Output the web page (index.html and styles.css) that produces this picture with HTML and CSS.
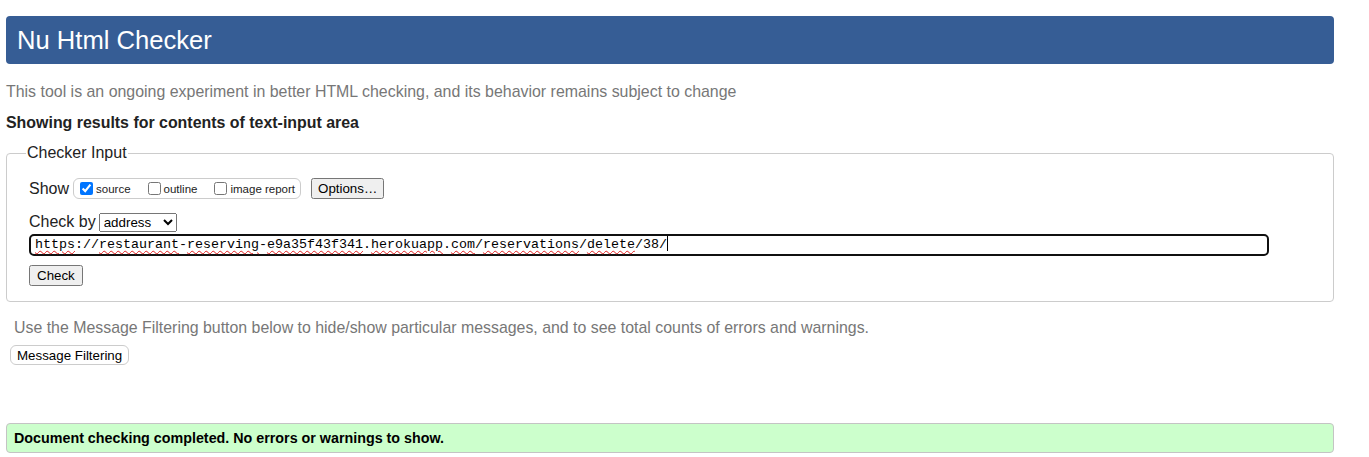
FILE: index.html
```html
<!DOCTYPE html>
<html lang="en">
<head>
<meta charset="utf-8">
<title>Nu Html Checker</title>
<link rel="stylesheet" href="styles.css">
</head>
<body>
<div class="page">
  <h1 class="header">Nu Html Checker</h1>
  <p class="intro">This tool is an ongoing experiment in better HTML checking, and its behavior remains subject to change</p>
  <p class="showing">Showing results for contents of text-input area</p>
  <fieldset class="checker">
    <legend class="legend">Checker Input</legend>
    <div class="row show-row">
      <span class="label">Show</span>
      <span class="opts">
        <label class="opt"><input type="checkbox" checked> source</label>
        <label class="opt"><input type="checkbox"> outline</label>
        <label class="opt"><input type="checkbox"> image report</label>
      </span>
      <button class="btn options">Options…</button>
    </div>
    <div class="row by-row">
      <span class="label">Check by</span>
      <select class="sel"><option>address</option></select>
    </div>
    <div class="url"><span class="sp">https</span>://<span class="sp">restaurant</span>-<span class="sp">reserving</span>-<span class="sp">e9a35f43f341</span>.<span class="sp">herokuapp</span>.<span class="sp">com</span>/<span class="sp">reservations</span>/<span class="sp">delete</span>/38/<span class="caret"></span></div>
    <div class="row check-row"><button class="btn check">Check</button></div>
  </fieldset>
  <p class="filter-note">Use the Message Filtering button below to hide/show particular messages, and to see total counts of errors and warnings.</p>
  <button class="filter-btn">Message Filtering</button>
  <div class="success">Document checking completed. No errors or warnings to show.</div>
</div>
</body>
</html>
```
FILE: styles.css
```css
html, body {
  margin: 0;
  padding: 0;
  background: #fff;
}
body {
  font-family: "Liberation Sans", Arial, sans-serif;
  font-size: 16px;
  color: #222;
}
.page {
  margin: 16px 35px 0 6px;
}
.header {
  margin: 0;
  height: 48px;
  line-height: 48px;
  background: #365d95;
  color: #fff;
  font-weight: normal;
  font-size: 25.6px;
  padding-left: 11px;
  border-radius: 4px;
}
.intro {
  margin: 19px 0 0 0;
  line-height: 18px;
  font-size: 15.93px;
  color: #777;
}
.showing {
  margin: 13px 0 0 0;
  line-height: 18px;
  font-size: 15.93px;
  font-weight: bold;
}
.checker {
  margin: 12px 0 0 0;
  border: 1px solid #ccc;
  border-radius: 4px;
  padding: 9px 22px 15px 22px;
}
.legend {
  padding: 0 1px;
  margin-left: -3px;
  line-height: 18px;
  color: #222;
}
.row {
  display: flex;
  align-items: center;
}
.show-row {
  height: 21px;
  margin-top: 7px;
}
.label {
  margin-right: 4px;
}
.opts {
  display: flex;
  align-items: center;
  box-sizing: border-box;
  height: 21px;
  border: 1px solid #ccc;
  border-radius: 6px;
  padding: 0 5px 0 6px;
  font-size: 11.5px;
  gap: 17px;
}
.opt {
  display: flex;
  align-items: center;
}
.opt input {
  margin: 0 3px 0 0;
  width: 13px;
  height: 13px;
}
.btn {
  font-family: "Liberation Sans", Arial, sans-serif;
  font-size: 13.333px;
  margin: 0;
}
.options {
  margin-left: 10px;
  height: 21px;
  padding: 1px 5px;
}
.by-row {
  margin-top: 14px;
  height: 18px;
}
.by-row .label {
  margin-right: 3px;
}
.sel {
  font-family: "Liberation Sans", Arial, sans-serif;
  font-size: 13.333px;
  width: 78px;
  height: 19px;
  margin: 0;
}
.url {
  box-sizing: border-box;
  margin-top: 3px;
  height: 22px;
  border: 2px solid #101010;
  border-radius: 5px;
  padding: 0 4px;
  width: 1240px;
  font-family: "Liberation Mono", "Courier New", monospace;
  font-size: 13.333px;
  line-height: 18px;
  white-space: nowrap;
  color: #000;
}
.sp {
  text-decoration: underline wavy #e02020;
  text-decoration-thickness: 1px;
  text-underline-offset: 2px;
}
.caret {
  display: inline-block;
  width: 1px;
  height: 15px;
  background: #000;
  vertical-align: -3px;
}
.check-row {
  margin-top: 9px;
}
.check {
  height: 21px;
  padding: 1px 6px;
}
.filter-note {
  margin: 17px 0 0 8px;
  line-height: 18px;
  font-size: 15.9px;
  color: #777;
}
.filter-btn {
  display: block;
  margin: 8px 0 0 4px;
  font-family: "Liberation Sans", Arial, sans-serif;
  font-size: 13.333px;
  color: #000;
  background: #fff;
  border: 1px solid #ccc;
  border-radius: 6px;
  height: 20px;
  padding: 0 6px;
}
.success {
  margin-top: 58px;
  background: #ccffcc;
  border: 1px solid #c4c4c4;
  border-radius: 4px;
  padding: 0 7px;
  height: 28px;
  line-height: 28px;
  font-size: 14.3px;
  font-weight: bold;
  color: #000;
}
```
